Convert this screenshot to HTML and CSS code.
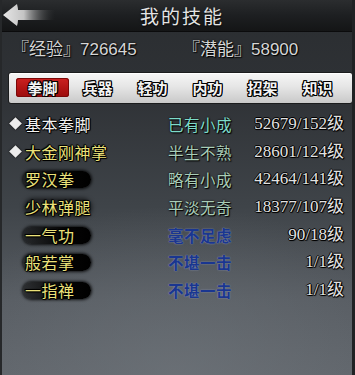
FILE: index.html
```html
<!DOCTYPE html>
<html lang="zh">
<head>
<meta charset="utf-8">
<title>我的技能</title>
<link rel="stylesheet" href="styles.css">
</head>
<body>
<div class="screen">
  <header class="topbar">
    <svg class="back" width="52" height="22" viewBox="0 0 52 22" aria-hidden="true">
      <defs>
        <linearGradient id="ag" x1="0" y1="0" x2="1" y2="0">
          <stop offset="0" stop-color="#e6e6e6"/>
          <stop offset="0.4" stop-color="#c4c4c4"/>
          <stop offset="1" stop-color="#3a3c3e" stop-opacity="0"/>
        </linearGradient>
      </defs>
      <path d="M0 11 L14 0 Q15 4 15 6 L52 6 L52 16 L15 16 Q15 18 14 22 Z" fill="url(#ag)"/>
    </svg>
    <h1 class="title">我的技能</h1>
  </header>

  <div class="stats">
    <span class="stat">『经验』726645</span>
    <span class="stat">『潜能』58900</span>
  </div>

  <nav class="tabs">
    <span class="tab active">拳脚</span>
    <span class="tab">兵器</span>
    <span class="tab">轻功</span>
    <span class="tab">内功</span>
    <span class="tab">招架</span>
    <span class="tab">知识</span>
  </nav>

  <ul class="skills">
    <li class="skill">
      <span class="mark"><i class="diamond"></i></span>
      <span class="name name-basic">基本拳脚</span>
      <span class="status s-teal">已有小成</span>
      <span class="level">52679/152级</span>
    </li>
    <li class="skill">
      <span class="mark"><i class="diamond"></i></span>
      <span class="name">大金刚神掌</span>
      <span class="status s-sage">半生不熟</span>
      <span class="level">28601/124级</span>
    </li>
    <li class="skill">
      <span class="mark"></span>
      <span class="name"><b class="blob">罗汉拳</b></span>
      <span class="status s-sage">略有小成</span>
      <span class="level">42464/141级</span>
    </li>
    <li class="skill">
      <span class="mark"></span>
      <span class="name"><b class="halo">少林弹腿</b></span>
      <span class="status s-sage">平淡无奇</span>
      <span class="level">18377/107级</span>
    </li>
    <li class="skill">
      <span class="mark"></span>
      <span class="name"><b class="blob">一气功</b></span>
      <span class="status s-blue">毫不足虑</span>
      <span class="level">90/18级</span>
    </li>
    <li class="skill">
      <span class="mark"></span>
      <span class="name"><b class="blob">般若掌</b></span>
      <span class="status s-blue">不堪一击</span>
      <span class="level">1/1级</span>
    </li>
    <li class="skill">
      <span class="mark"></span>
      <span class="name"><b class="blob">一指禅</b></span>
      <span class="status s-blue">不堪一击</span>
      <span class="level">1/1级</span>
    </li>
  </ul>
</div>
</body>
</html>
```

FILE: styles.css
```css
* { box-sizing: border-box; }

html, body {
  margin: 0;
  padding: 0;
  background: #2b2e31;
}

.screen {
  width: 355px;
  height: 375px;
  overflow: hidden;
  font-family: "Noto Sans CJK SC", "Noto Sans", sans-serif;
  background:
    radial-gradient(ellipse 70% 45% at 50% 100%, rgba(112,118,124,0.6), rgba(112,118,124,0) 100%),
    linear-gradient(180deg, #2a2d30 0%, #2f3236 25%, #3f4449 55%, #575c62 80%, #60656b 100%);
  border-right: 3px solid #202224;
  border-left: 2px solid #26282a;
}

/* ---------- header ---------- */
.topbar {
  height: 32px;
  display: flex;
  align-items: center;
  background: linear-gradient(180deg, #2b2d2f 0%, #1d1f21 50%, #141516 100%);
  border-bottom: 1px solid #0b0b0c;
  margin-left: -2px;
  margin-right: -3px;
  padding-left: 3px;
}

.back {
  flex: none;
  display: block;
  margin-top: -1px;
}

.title {
  flex: 1;
  margin: 0;
  padding-right: 46px;
  text-align: center;
  font-size: 19px;
  font-weight: 400;
  letter-spacing: 2px;
  color: #e4e4e4;
  line-height: 31px;
  text-shadow: 0 1px 2px #000;
}

/* ---------- stats ---------- */
.stats {
  display: grid;
  grid-template-columns: 171px 1fr;
  padding: 8px 0 0 10px;
  height: 40px;
}

.stat {
  font-family: "Liberation Sans", "Noto Sans CJK SC", sans-serif;
  font-size: 17px;
  line-height: 20px;
  color: #d6d6d6;
  text-shadow: 0 0 2px #000, 1px 1px 1px #000;
  white-space: nowrap;
}

/* ---------- tabs ---------- */
.tabs {
  display: flex;
  height: 32px;
  margin: 0 -1px 0 6px;
  padding: 5px 0 0 6px;
  border: 1px solid #1b1c1d;
  border-radius: 3px;
  background: linear-gradient(180deg, #f6f6f6 0%, #e6e6e6 45%, #c9c9c9 100%);
  box-shadow: inset 0 1px 0 #fff;
}

.tab {
  width: 53px;
  margin: 0 1px;
  height: 19px;
  text-align: center;
  font-size: 15px;
  font-weight: 700;
  line-height: 19px;
  color: #f4f4f4;
  text-shadow:
    1px 0 0 #000, -1px 0 0 #000, 0 1px 0 #000, 0 -1px 0 #000,
    1px 1px 0 #000, -1px -1px 0 #000, 1px -1px 0 #000, -1px 1px 0 #000;
}

.tab.active {
  border-radius: 3px;
  background: linear-gradient(180deg, #cc2222 0%, #b21414 55%, #9a0c0c 100%);
  box-shadow: inset 0 0 0 1px #7a0808;
}

/* ---------- skill list ---------- */
.skills {
  list-style: none;
  margin: 6px 0 0 0;
  padding: 0;
}

.skill {
  display: grid;
  grid-template-columns: 20px 143px 82px 1fr;
  align-items: center;
  height: 27.7px;
  padding: 0 8px 0 3px;
}

.mark {
  display: flex;
  justify-content: center;
  align-items: center;
}

.diamond {
  display: block;
  width: 9px;
  height: 9px;
  background: #ececec;
  transform: rotate(45deg);
  box-shadow: 0 0 2px #000;
}

.name {
  font-size: 16px;
  line-height: 20px;
  letter-spacing: 0.5px;
  color: #ece27a;
  white-space: nowrap;
  text-shadow:
    1px 0 0 #000, -1px 0 0 #000, 0 1px 0 #000, 0 -1px 0 #000,
    1px 1px 1px #000, -1px -1px 1px #000;
}

.name-basic {
  color: #f2f2f2;
}

.name b {
  font-weight: 400;
  display: inline-block;
}

.blob {
  width: 68px;
  margin-left: -2px;
  padding-left: 2px;
  height: 17px;
  line-height: 17px;
  border-radius: 9px;
  background: linear-gradient(90deg, rgba(10,10,10,0.55) 0%, #050505 60%, #000 100%);
  box-shadow: 0 0 3px 1px rgba(0,0,0,0.8);
}

.halo {
  height: 17px;
  line-height: 17px;
  border-radius: 8px;
  background: rgba(0,0,0,0.45);
  box-shadow: 0 0 4px 1px rgba(0,0,0,0.55);
}

.status {
  font-size: 15.5px;
  line-height: 20px;
  letter-spacing: 0.5px;
  white-space: nowrap;
  text-shadow: 0 0 2px #000, 1px 1px 1px #000;
}

.s-teal { color: #7edcca; }
.s-sage { color: #a9cdb7; }
.s-blue {
  color: #1a3690;
  font-weight: 700;
  text-shadow: 0 0 2px rgba(150,170,215,0.5), 0 0 1px rgba(180,195,230,0.45);
}

.level {
  text-align: right;
  font-family: "Liberation Serif", "Noto Sans CJK SC", serif;
  font-size: 17px;
  line-height: 20px;
  color: #e2e2e2;
  white-space: nowrap;
  text-shadow:
    1px 0 0 #000, -1px 0 0 #000, 0 1px 0 #000, 0 -1px 0 #000,
    1px 1px 1px #000;
}
```
